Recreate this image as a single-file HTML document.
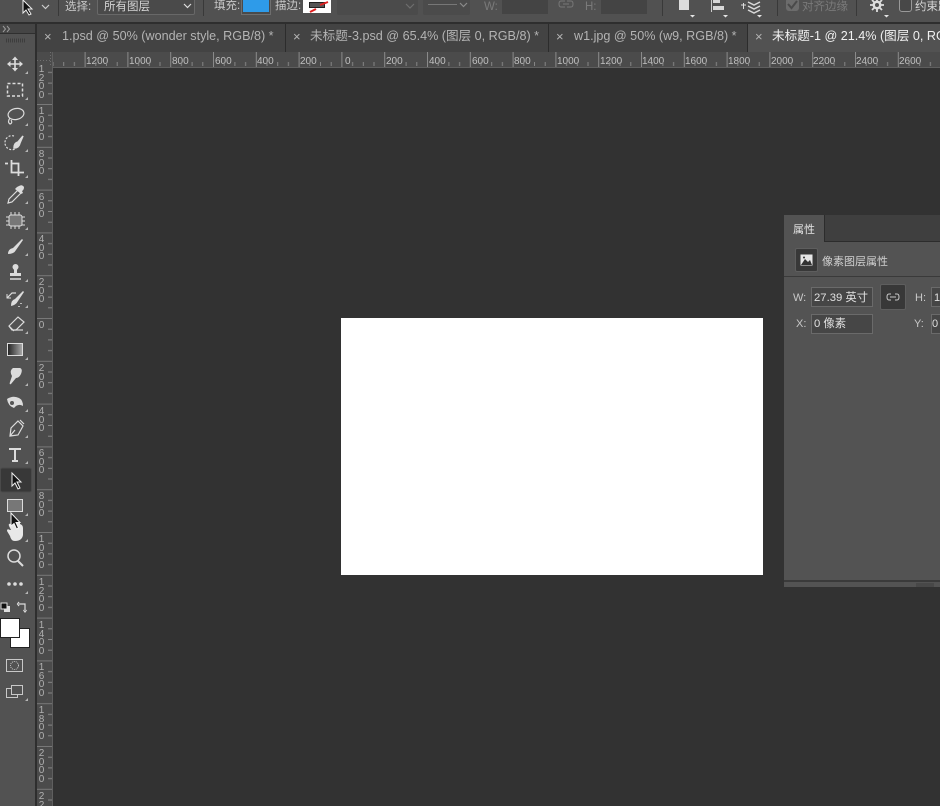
<!DOCTYPE html>
<html><head><meta charset="utf-8"><style>
html,body{margin:0;padding:0;background:#323232}
#r{position:relative;width:940px;height:806px;overflow:hidden;background:#323232;font-family:"Liberation Sans","Noto Sans CJK SC",sans-serif;color:#c4c4c4}
#r div{position:absolute;box-sizing:border-box}
.t{font-size:11.5px;line-height:14px;white-space:nowrap;color:#c8c8c8}
.d{color:#7a7a7a}
.tab{top:24px;height:28px;background:#434343;border-right:1px solid #2c2c2c}
.tt{top:28px;font-size:12.6px;line-height:17px;white-space:nowrap;color:#b4b4b4}
.x{top:28px;font-size:13px;line-height:17px;color:#b4b4b4}
.h{top:56px;font-size:10px;line-height:12px;color:#c0c0c0}
.v{left:38px;width:7px;text-align:center;font-size:10px;line-height:8.7px;color:#b0b0b0}
.i{background:#464646;border:1px solid #6a6a6a}
</style></head><body><div id="r">
<div style="left:0;top:0;width:940px;height:22px;background:#515151"></div>
<div style="left:0;top:22px;width:940px;height:2px;background:#2e2e2e"></div>
<div style="left:58px;top:0;width:1px;height:16px;background:#393939"></div>
<div style="left:203px;top:0;width:1px;height:16px;background:#393939"></div>
<div style="left:662px;top:0;width:1px;height:16px;background:#393939"></div>
<div style="left:777px;top:0;width:1px;height:16px;background:#393939"></div>
<div style="left:856px;top:0;width:1px;height:16px;background:#393939"></div>
<div class="t" style="left:65px;top:0">选择:</div>
<div style="left:97px;top:-3px;width:98px;height:18px;background:#4a4a4a;border:1px solid #686868;border-radius:2px"></div>
<div class="t" style="left:104px;top:0;color:#d4d4d4">所有图层</div>
<div class="t" style="left:214px;top:-1px">填充:</div>
<div style="left:241px;top:-2px;width:30px;height:17px;background:#4a4a4a;border:1px solid #6e6e6e"></div>
<div style="left:243px;top:0;width:26px;height:12px;background:#2e9be9"></div>
<div class="t" style="left:275px;top:-1px">描边:</div>
<div style="left:303px;top:-2px;width:28px;height:15px;background:#fff"></div>
<div style="left:309px;top:2px;width:16px;height:6px;background:#555;border:1px solid #222"></div>
<div style="left:337px;top:-2px;width:81px;height:17px;background:#4b4b4b;border-radius:2px"></div>
<div style="left:423px;top:-2px;width:47px;height:17px;background:#4b4b4b;border-radius:2px"></div>
<div style="left:428px;top:4px;width:29px;height:1px;background:#777"></div>
<div class="t d" style="left:484px;top:0">W:</div>
<div style="left:502px;top:-2px;width:46px;height:16px;background:#444"></div>
<div class="t d" style="left:585px;top:0">H:</div>
<div style="left:601px;top:-2px;width:46px;height:16px;background:#444"></div>
<div style="left:679px;top:-1px;width:10px;height:11px;background:#dcdcdc"></div>
<div style="left:786px;top:-2px;width:13px;height:13px;background:#6c6c6c;border-radius:3px"></div>
<div class="t d" style="left:802px;top:0">对齐边缘</div>
<div style="left:899px;top:-2px;width:13px;height:14px;background:#484848;border:1px solid #999;border-radius:3px"></div>
<div class="t" style="left:915px;top:0;color:#d4d4d4">约束路径</div>

<div style="left:0;top:24px;width:35px;height:782px;background:#525252"></div>
<div style="left:0;top:24px;width:35px;height:10px;background:#454545;border-bottom:1px solid #2f2f2f"></div>
<div style="left:35px;top:24px;width:2px;height:782px;background:#2e2e2e"></div>

<div class="tab" style="left:37px;width:249px"></div>
<div class="tab" style="left:286px;width:263px"></div>
<div class="tab" style="left:549px;width:199px"></div>
<div class="tab" style="left:748px;width:192px;background:#525252;border:0"></div>
<div class="x" style="left:44px">×</div><div class="tt" style="left:62px">1.psd @ 50% (wonder style, RGB/8) *</div>
<div class="x" style="left:293px">×</div><div class="tt" style="left:310px">未标题-3.psd @ 65.4% (图层 0, RGB/8) *</div>
<div class="x" style="left:556px">×</div><div class="tt" style="left:574px">w1.jpg @ 50% (w9, RGB/8) *</div>
<div class="x" style="left:755px">×</div><div class="tt" style="left:772px;color:#f0f0f0">未标题-1 @ 21.4% (图层 0, RGB/8) *</div>

<div style="left:37px;top:52px;width:903px;height:16px;background:#4b4b4b;border-bottom:1px solid #5f5f5f"></div>
<div style="left:37px;top:52px;width:16px;height:754px;background:#4b4b4b;border-right:1px solid #5f5f5f"></div>

<div class="h" style="left:86px">1200</div><div class="h" style="left:129px">1000</div><div class="h" style="left:172px">800</div><div class="h" style="left:215px">600</div><div class="h" style="left:257px">400</div><div class="h" style="left:300px">200</div><div class="h" style="left:345px">0</div><div class="h" style="left:386px">200</div><div class="h" style="left:429px">400</div><div class="h" style="left:472px">600</div><div class="h" style="left:514px">800</div><div class="h" style="left:557px">1000</div><div class="h" style="left:600px">1200</div><div class="h" style="left:642px">1400</div><div class="h" style="left:685px">1600</div><div class="h" style="left:728px">1800</div><div class="h" style="left:771px">2000</div><div class="h" style="left:813px">2200</div><div class="h" style="left:856px">2400</div><div class="h" style="left:899px">2600</div>

<div class="v" style="top:66px">1<br>2<br>0<br>0</div>
<div class="v" style="top:108px">1<br>0<br>0<br>0</div>
<div class="v" style="top:151px">8<br>0<br>0</div>
<div class="v" style="top:194px">6<br>0<br>0</div>
<div class="v" style="top:236px">4<br>0<br>0</div>
<div class="v" style="top:279px">2<br>0<br>0</div>
<div class="v" style="top:322px">0</div>
<div class="v" style="top:365px">2<br>0<br>0</div>
<div class="v" style="top:408px">4<br>0<br>0</div>
<div class="v" style="top:450px">6<br>0<br>0</div>
<div class="v" style="top:493px">8<br>0<br>0</div>
<div class="v" style="top:536px">1<br>0<br>0<br>0</div>
<div class="v" style="top:579px">1<br>2<br>0<br>0</div>
<div class="v" style="top:622px">1<br>4<br>0<br>0</div>
<div class="v" style="top:664px">1<br>6<br>0<br>0</div>
<div class="v" style="top:707px">1<br>8<br>0<br>0</div>
<div class="v" style="top:750px">2<br>0<br>0<br>0</div>
<div class="v" style="top:793px">2<br>2</div>

<div style="left:341px;top:318px;width:422px;height:257px;background:#fff"></div>

<div style="left:784px;top:215px;width:156px;height:372px;background:#535353"></div>
<div style="left:824px;top:215px;width:116px;height:27px;background:#3f3f3f;border-left:1px solid #2c2c2c;border-bottom:1px solid #2c2c2c"></div>
<div class="t" style="left:793px;top:223px;font-size:11px;color:#e4e4e4">属性</div>
<div style="left:784px;top:276px;width:156px;height:1px;background:#3a3a3a"></div>
<div style="left:795px;top:248px;width:23px;height:24px;background:#383838;border:1px solid #5e5e5e;border-radius:2px"></div>
<div class="t" style="left:822px;top:255px;font-size:11px;color:#d0d0d0">像素图层属性</div>
<div class="t" style="left:793px;top:291px;font-size:11px">W:</div>
<div class="i" style="left:811px;top:287px;width:62px;height:20px"></div>
<div class="t" style="left:814px;top:291px;font-size:11.3px;color:#e0e0e0">27.39 英寸</div>
<div style="left:880px;top:284px;width:26px;height:26px;background:#383838;border:1px solid #5e5e5e;border-radius:2px"></div>
<div class="t" style="left:915px;top:291px;font-size:11px">H:</div>
<div class="i" style="left:931px;top:287px;width:20px;height:20px"></div>
<div class="t" style="left:934px;top:291px;font-size:11px;color:#e0e0e0">16</div>
<div class="t" style="left:796px;top:317px;font-size:11px">X:</div>
<div class="i" style="left:811px;top:314px;width:62px;height:20px"></div>
<div class="t" style="left:814px;top:317px;font-size:11.3px;color:#e0e0e0">0 像素</div>
<div class="t" style="left:914px;top:317px;font-size:11px">Y:</div>
<div class="i" style="left:931px;top:314px;width:20px;height:20px"></div>
<div class="t" style="left:932px;top:317px;font-size:11px;color:#e0e0e0">0</div>
<div style="left:784px;top:580px;width:156px;height:2px;background:#3a3a3a"></div>

<svg style="position:absolute;left:0;top:0" width="940" height="806" viewBox="0 0 940 806" fill="none">
<defs>
<pattern id="hm" x="341.4" y="52" width="42.8" height="15" patternUnits="userSpaceOnUse"><rect x="0" y="0" width="1" height="15" fill="#8a8a8a"/><rect x="10.7" y="10" width="1" height="4" fill="#858585"/><rect x="21.4" y="10" width="1" height="4" fill="#858585"/><rect x="32.1" y="10" width="1" height="4" fill="#858585"/></pattern>
<pattern id="vm" x="37" y="318" width="15" height="42.8" patternUnits="userSpaceOnUse"><rect y="0" width="15" height="1" fill="#787878"/><rect x="11" y="10.7" width="4" height="1" fill="#858585"/><rect x="11" y="21.4" width="4" height="1" fill="#858585"/><rect x="11" y="32.1" width="4" height="1" fill="#858585"/></pattern>
</defs>
<rect x="53" y="52" width="887" height="15" fill="url(#hm)"/>
<rect x="37" y="68" width="15" height="738" fill="url(#vm)"/>
<path d="M37 60.500H52M50.500 52V67" stroke="#6e6e6e" stroke-dasharray="1 2"/>

<!-- options bar icons -->
<path d="M23 0V13L26 10L29 15L31 14L28 9H32Z" fill="#111" stroke="#eee"/>
<path d="M42 5L45.500 8.500L49 5" stroke="#ccc" stroke-width="1.200"/>
<path d="M184 4L187.500 7.500L191 4" stroke="#ddd" stroke-width="1.200"/>
<path d="M406 4L410 8L414 4" stroke="#6e6e6e" stroke-width="1.200"/>
<path d="M460 3L463.500 6.500L467 3" stroke="#8a8a8a" stroke-width="1.200"/>
<path d="M310 12L316 9M320 5L328 2" stroke="#e02020" stroke-width="2"/>
<path d="M565 1H561Q559 1 559 4Q559 7 561 7H565M567 1H571Q573 1 573 4Q573 7 571 7H567M563 4H569" stroke="#777"/>
<path d="M711.500 -1V12" stroke="#ccc"/><path d="M713 -1H720V3H713ZM713 6H724V10H713Z" fill="#d8d8d8"/>
<path d="M741 5H746M743.500 3V9" stroke="#ddd"/>
<path d="M748 2L754 5L760 2M748 6L754 9L760 6M748 10L754 13L760 10" stroke="#d8d8d8" stroke-width="1.500"/>
<path d="M690 15H695L692.500 17.500ZM723 15H728L725.500 17.500ZM757 15H762L759.500 17.500ZM884 15H889L886.500 17.500Z" fill="#e4e4e4"/>
<path d="M788 4L791.500 8L797 1" stroke="#4a4a4a" stroke-width="2"/>
<path d="M877 -2V12M870 5H884M872 0L882 10M882 0L872 10" stroke="#ddd" stroke-width="1.800"/>
<circle cx="877" cy="5" r="4.500" fill="#ddd"/><circle cx="877" cy="5" r="2" fill="#515151"/>

<!-- grip -->
<path d="M6 40.500H25" stroke="#3d3d3d" stroke-width="4" stroke-dasharray="1 1"/>
<path d="M3 26L5.500 29L3 32M7 26L9.500 29L7 32" stroke="#9a9a9a" stroke-width="1"/>

<!-- tool corner triangles -->
<path fill="#b5b5b5" d="M28 71V74H25ZM28 97V100H25ZM28 123V126H25ZM28 149V152H25ZM28 175V178H25ZM28 201V204H25ZM28 227V230H25ZM28 253V256H25ZM28 279V282H25ZM28 305V308H25ZM28 331V334H25ZM28 357V360H25ZM28 383V386H25ZM28 409V412H25ZM28 435V438H25ZM28 461V464H25ZM28 487V490H25ZM28 513V516H25ZM28 539V542H25ZM28 591V594H25ZM28 698V701H25Z"/>

<g stroke="#dcdcdc" stroke-width="1.500">
<!-- move --><path d="M15 58V70M8.500 64H21.500" stroke-width="1.600"/><path d="M15 56.500L12 60H18ZM15 71.500L12 68H18ZM7 64L10.500 61V67ZM23 64L19.500 61V67Z" fill="#dcdcdc" stroke="none"/>
<!-- marquee --><rect x="7.500" y="83.500" width="15" height="12.500" stroke-dasharray="3 2"/>
<!-- lasso --><ellipse cx="16" cy="114" rx="8" ry="5.500" transform="rotate(-12 16 114)" stroke-width="1.200"/><path d="M10 118Q7 122 10 124Q13 123 11 120" stroke-width="1.200"/>
<!-- quick select --><path d="M14 136A7 7 0 1 0 15 149" stroke-dasharray="2 1.500" stroke-width="1.200"/><path d="M23 136L18 142Q14 143 14 148Q19 148 20 143Z" fill="#dcdcdc"/>
<!-- crop --><path d="M5 163.500H8M11.500 160V172.500H21M11.500 163.500H18.500V176M21 172.500H24" stroke-width="1.800"/>
<!-- eyedropper --><path d="M18 190L9 199L8 203L12 202L21 193" stroke-width="1.200"/><path d="M19 186Q22 184 24 187Q24 190 22 191L23 193L21 194L15 189L17 187Z" fill="#dcdcdc" stroke="none"/>
<!-- patch --><rect x="9" y="215" width="13" height="11" rx="2" fill="#777" stroke-width="1"/><path d="M6 217H9M6 221H9M6 225H9M22 217H25M22 221H25M22 225H25M11 212V215M15 212V215M19 212V215M11 226V229M15 226V229M19 226V229" stroke-width="1"/>
<!-- brush --><path d="M22 239L13 248Q8 249 8 254Q14 254 16 250L23 240Z" fill="#dcdcdc" stroke="none"/>
<!-- stamp --><circle cx="15.500" cy="267" r="3" fill="#dcdcdc" stroke="none"/><path d="M14 269H17V273H21V276H10V273H14Z" fill="#dcdcdc" stroke="none"/><path d="M10 279H21"/>
<!-- history brush --><path d="M23 291L15 299Q11 300 11 306Q16 305 18 301L24 292Z" fill="#dcdcdc" stroke="none"/><path d="M7 298L12 293H16" stroke-width="1.200"/><path d="M7 294V298H11" stroke-width="1"/><path d="M21 303V304M19 306V307" stroke-dasharray="1 1"/>
<!-- eraser --><path d="M9 326L18 317L24 322L16 330H12Z" stroke-width="1.200"/><path d="M9 326L14 331" stroke-width="1.200"/><path d="M15 330H23" stroke-width="1.200"/>
</g>
<defs><linearGradient id="g"><stop offset="0" stop-color="#222"/><stop offset="1" stop-color="#aaa"/></linearGradient></defs>
<rect x="7.500" y="343.500" width="15" height="12" fill="url(#g)" stroke="#dcdcdc"/>
<g fill="#dcdcdc">
<!-- smudge --><path d="M13 368H20Q23 369 21 374Q19 378 16 378L11 384Q9 385 10 382L12 376Q9 371 13 368Z"/>
<!-- sponge --><path d="M7 399Q13 395 19 398Q23 400 23 406Q18 403 14 408Q8 406 7 399Z"/>
</g>
<circle cx="12" cy="403" r="2" fill="#555"/>
<!-- pen --><path d="M18 421L23 426L18 435L10 436L11 428Z M10 436L15 430M20 420L24 424" stroke="#dcdcdc" stroke-width="1.200"/>
<!-- type --><path d="M9 449H21M15 449V461M12 461H18" stroke="#dcdcdc" stroke-width="2"/>
<!-- active tool --><rect x="0.500" y="468" width="31" height="24" rx="2" fill="#383838" stroke="#4a4a4a"/>
<path d="M12 473V486L15 483L18 489L20 488L17 482H21Z" fill="#111" stroke="#eee"/>
<!-- rect --><rect x="7.500" y="499.500" width="15" height="12" fill="#777" stroke="#dcdcdc"/>
<!-- hand --><path d="M11 530L9 526Q8 523 11 524L12 526V522H20V524Q23 525 23 528V535Q22 541 15 541Q11 541 10 536L7 531Q7 528 10 530Z" fill="#e8e8e8"/>
<!-- cursor --><path d="M11 513V526L14 523.500L16.500 529L18.500 528L16 522.500H20Z" fill="#111" stroke="#f4f4f4"/>
<!-- zoom --><circle cx="14" cy="556" r="6" stroke="#dcdcdc" stroke-width="1.500"/><path d="M18 561L23 566" stroke="#dcdcdc" stroke-width="2"/>
<!-- dots --><circle cx="9" cy="584" r="1.800" fill="#dcdcdc"/><circle cx="15" cy="584" r="1.800" fill="#dcdcdc"/><circle cx="21" cy="584" r="1.800" fill="#dcdcdc"/>
<!-- default colors --><rect x="4" y="606" width="6" height="6" fill="#ddd"/><rect x="1" y="603" width="6" height="6" fill="#111" stroke="#ddd"/>
<!-- swap --><path d="M19 604H25V610M19 602L17.500 604L19 606M23.500 610L25 612L26.500 610" stroke="#dcdcdc" stroke-width="1.200"/>
<!-- fg/bg --><rect x="10.500" y="628.500" width="19" height="19" fill="#fff" stroke="#222"/><rect x="0.500" y="618.500" width="19" height="19" fill="#fff" stroke="#222"/>
<!-- quick mask --><rect x="6.500" y="659.500" width="16" height="12" stroke="#c8c8c8"/><circle cx="14.500" cy="665.500" r="4" stroke="#c8c8c8" stroke-dasharray="1 1"/>
<!-- screen mode --><rect x="6.500" y="688.500" width="11" height="9" stroke="#c8c8c8"/><rect x="11.500" y="685.500" width="11" height="9" fill="#525252" stroke="#c8c8c8"/>

<!-- panel icons -->
<rect x="800.500" y="254.500" width="12" height="11" fill="#e6e6e6"/>
<path d="M801 265L805 259L808 262L810 260L812 265Z" fill="#333"/>
<circle cx="804" cy="257.500" r="1" fill="#333"/>
<path d="M891 294H889Q887 294 887 297Q887 300 889 300H891M895 294H897Q899 294 899 297Q899 300 897 300H895M890 297H896" stroke="#c8c8c8" stroke-width="1"/>
<path d="M917 583V587M919 583V587M921 583V587M923 583V587M925 583V587M927 583V587M929 583V587M931 583V587M933 583V587" stroke="#3e3e3e"/>
</svg>
</div></body></html>
